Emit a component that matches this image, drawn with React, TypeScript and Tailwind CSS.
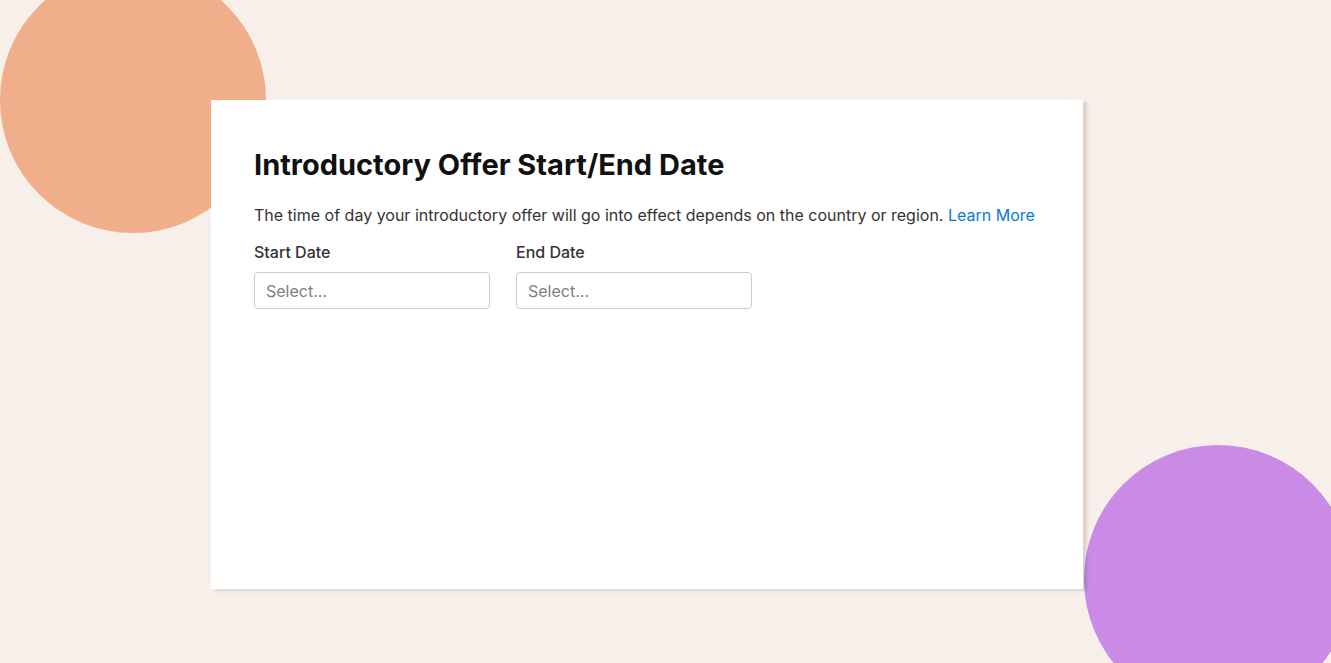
import React from "react";

function DateField({ label }: { label: string }) {
  return (
    <div className="flex flex-col">
      <label className="text-[16px] leading-[20px] font-medium text-[#333333]">{label}</label>
      <div className="mt-[10px] w-[236px] h-[37px] rounded-[4px] border border-[#cccccc] bg-white px-[11px] flex items-center">
        <span className="text-[16px] text-[#808080]">Select...</span>
      </div>
    </div>
  );
}

export default function App() {
  return (
    <div
      className="relative w-full h-[663px] overflow-hidden bg-[#f7efe9]"
      style={{ fontFamily: "Inter, 'Noto Sans', sans-serif" }}
    >
      {/* decorative blobs */}
      <div className="absolute left-[0px] top-[-33px] w-[266px] h-[266px] rounded-full bg-[#f0ae8a]" />
      <div className="absolute left-[1084px] top-[445px] w-[268px] h-[268px] rounded-full bg-[#c98be6]" />

      <div className="relative flex pt-[100px] pl-[211px]">
        <div className="w-[872px] h-[489px] bg-white shadow-[4px_2px_3px_rgba(0,0,0,0.12)] pl-[43px] pr-[40px] pt-[47px]">
          <h1 className="text-[29px] leading-[36px] font-bold text-[#111111]">
            Introductory Offer Start/End Date
          </h1>
          <p className="mt-[20px] text-[16px] leading-[24px] text-[#333333]">
            The time of day your introductory offer will go into effect depends on the country or region.{" "}
            <a className="text-[#0a7ad6]">Learn More</a>
          </p>
          <div className="mt-[15px] flex gap-[26px]">
            <DateField label="Start Date" />
            <DateField label="End Date" />
          </div>
        </div>
      </div>
    </div>
  );
}
